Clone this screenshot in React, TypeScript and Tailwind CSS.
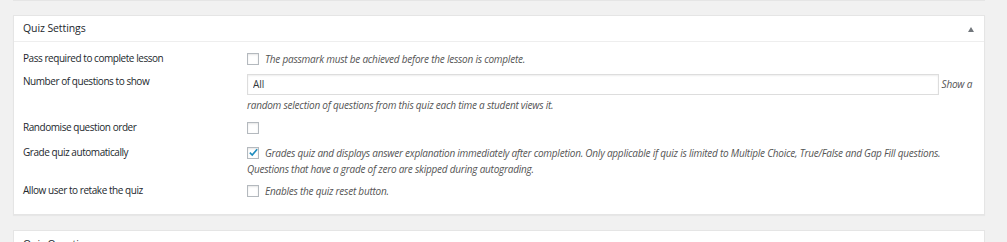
const font = "font-['Segoe_UI','Open_Sans',sans-serif]";

function Checkbox({ checked = false }: { checked?: boolean }) {
  return (
    <span className="relative inline-block w-[12px] h-[12px] align-[-2px] mr-[6px] border border-[#b4b9be] bg-white shadow-[inset_0_1px_2px_rgba(0,0,0,0.1)]">
      {checked && (
        <svg viewBox="0 0 12 12" className="absolute left-[0px] top-[-1px] w-[11px] h-[11px]">
          <path d="M2 6.2 L4.6 8.8 L10 2.4" fill="none" stroke="#1e8cbe" strokeWidth="1.8" />
        </svg>
      )}
    </span>
  );
}

function Row({ label, className = "", children }: { label: string; className?: string; children: React.ReactNode }) {
  return (
    <div className={`flex items-start ${className}`}>
      <div className="w-[224px] shrink-0 leading-[16px] tracking-[-0.45px] text-[#23282d]">{label}</div>
      <div className="flex-1 pt-[1px] leading-[16px]">{children}</div>
    </div>
  );
}

export default function App() {
  return (
    <div className={`min-h-[242px] h-[242px] overflow-hidden bg-[#f1f1f1] text-[10px] ${font}`}>
      <div className="mx-[13px] w-[972px] h-[1px] bg-[#e5e5e5]" />
      {/* Quiz Settings box */}
      <div className="mt-[14px] ml-[13px] w-[972px] bg-white border border-[#e5e5e5] shadow-[0_1px_1px_rgba(0,0,0,0.04)]">
        <div className="h-[26px] flex items-center justify-between pl-[9px] pr-[10px] border-b border-[#eeeeee]">
          <h2 className="text-[10.5px] tracking-[-0.1px] text-[#23282d] pt-[1px]">Quiz Settings</h2>
          <svg viewBox="0 0 6 5" className="w-[6px] h-[5px] mt-[2px]">
            <path d="M3 0 L6 5 L0 5 Z" fill="#72777c" />
          </svg>
        </div>
        <div className="pt-[8px] pb-[15px] pl-[9px] pr-[9px] flex flex-col">
          <Row label="Pass required to complete lesson">
            <Checkbox />
            <span className="italic tracking-[-0.23px] text-[#555]">The passmark must be achieved before the lesson is complete.</span>
          </Row>
          <Row label="Number of questions to show" className="mt-[6px]">
            <div className="leading-[21px]">
              <input
                type="text"
                defaultValue="All"
                className="w-[692px] h-[21px] align-top px-[5px] border border-[#dddddd] text-[10px] text-[#32373c] shadow-[inset_0_1px_2px_rgba(0,0,0,0.07)] outline-none"
              />{" "}
              <span className="italic tracking-[-0.23px] text-[#555]">
                Show a random selection of questions from this quiz each time a student views it.
              </span>
            </div>
          </Row>
          <Row label="Randomise question order" className="mt-[3px]">
            <Checkbox />
          </Row>
          <Row label="Grade quiz automatically" className="mt-[8px]">
            <Checkbox checked />
            <span className="italic tracking-[-0.23px] text-[#555]">
              Grades quiz and displays answer explanation immediately after completion. Only applicable if quiz is
              limited to Multiple Choice, True/False and Gap Fill questions. Questions that have a grade of zero are
              skipped during autograding.
            </span>
          </Row>
          <Row label="Allow user to retake the quiz" className="mt-[5px]">
            <Checkbox />
            <span className="italic tracking-[-0.23px] text-[#555]">Enables the quiz reset button.</span>
          </Row>
        </div>
      </div>
      {/* Quiz Questions box (cut off) */}
      <div className="mt-[15px] ml-[13px] w-[972px] bg-white border border-[#e5e5e5]">
        <div className="h-[26px] flex items-center pl-[9px] pr-[10px]">
          <h2 className="text-[10.5px] tracking-[-0.1px] text-[#23282d] pt-[1px]">Quiz Questions</h2>
        </div>
      </div>
    </div>
  );
}
